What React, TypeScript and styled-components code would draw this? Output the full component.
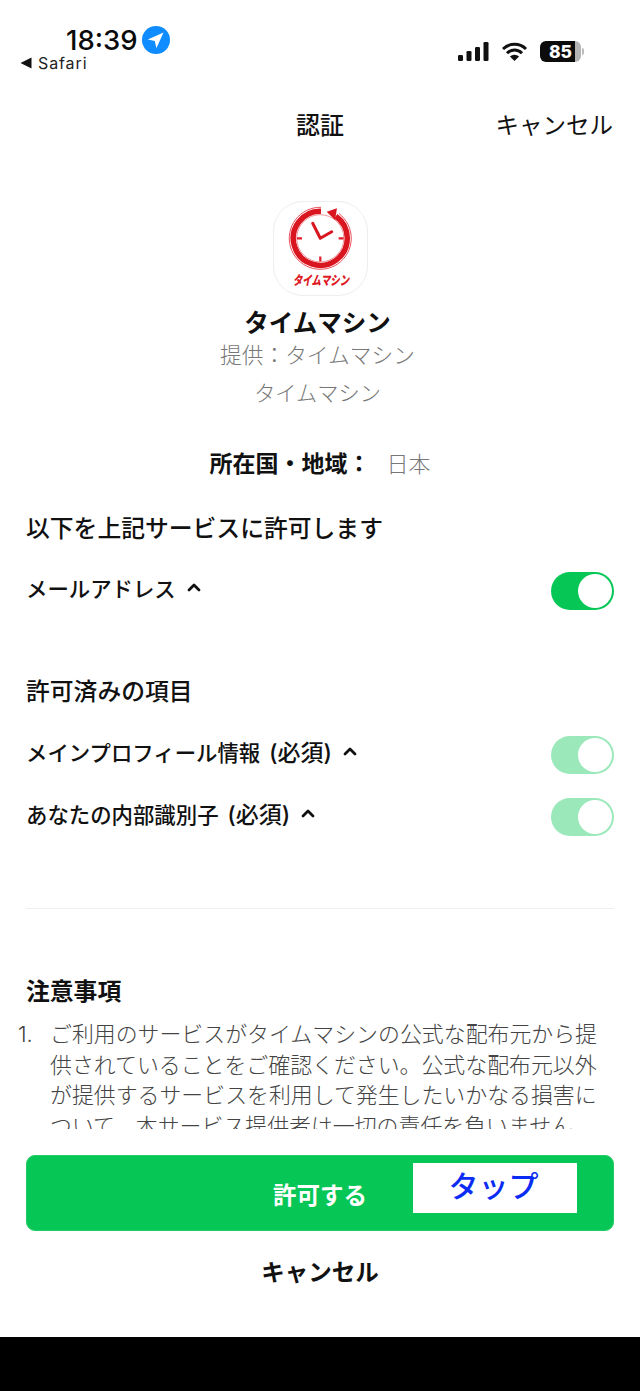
import React from "react";
import styled, { createGlobalStyle } from "styled-components";

const Global = createGlobalStyle`
  html, body { margin: 0; padding: 0; background: #fff; }
  * { box-sizing: border-box; }
`;
const JP = `"Inter", "Noto Sans CJK JP", sans-serif`;

const Page = styled.div`
  width: 640px; height: 1391px; display: flex; flex-direction: column;
  background: #fff; font-family: ${JP}; color: #111; overflow: hidden;
`;
const StatusBar = styled.header`
  height: 100px; padding: 24px 50px 0 20px; display: flex; justify-content: space-between; align-items: flex-start;
`;
const StatusLeft = styled.div`display: flex; flex-direction: column;`;
const TimeRow = styled.div`display: flex; align-items: center; gap: 4px; padding-left: 46px; height: 32px;`;
const Time = styled.span`font: 500 27.5px/32px "Inter", sans-serif; color: #0a0a0a;`;
const BackRow = styled.div`display: flex; align-items: center; gap: 6px; height: 14px;`;
const BackText = styled.span`font: 400 16px/14px "Inter", sans-serif; letter-spacing: 0.9px; color: #222;`;
const StatusRight = styled.div`display: flex; align-items: center; gap: 12px; padding-top: 17px; margin-right: 6px;`;
const Battery = styled.div`
  position: relative; width: 41px; height: 21px; border-radius: 6px; background: linear-gradient(to right, #0c0c0c 85%, #b4b4b4 85%);
  display: flex; align-items: center; justify-content: center; color: #fff;
  font: 800 17.5px/21px "Inter", sans-serif; margin-right: 3px;
  &::after { content: ""; position: absolute; right: -3px; top: 7px; width: 2px; height: 7px; border-radius: 0 2px 2px 0; background: #bbb; }
`;
const Nav = styled.nav`height: 52px; position: relative; display: flex; align-items: center; justify-content: center;`;
const NavTitle = styled.h1`margin: 0; font-size: 24px; font-weight: 500; line-height: 52px;`;
const NavCancel = styled.span`position: absolute; right: 27px; top: 0; font-size: 23.5px; line-height: 52px; color: #111;`;

const Provider = styled.section`display: flex; flex-direction: column; align-items: center; padding-top: 49px;`;
const Logo = styled.div`
  width: 95px; height: 95px; border-radius: 30px; border: 1px solid #eeeeee; background: #fff;
  display: flex; align-items: center; justify-content: center;
`;
const AppName = styled.div`font-size: 24.5px; font-weight: 700; line-height: 34px; margin-top: 10px; padding-right: 5px;`;
const Sub = styled.div<{ $top: number; $size: number }>`
  font-size: ${p => p.$size}px; font-weight: 300; line-height: 30px; color: #777; margin-top: ${p => p.$top}px; padding-right: 5px;
`;
const Region = styled.div`display: flex; justify-content: center; align-items: center; gap: 16px; margin-top: 37px; height: 34px;`;
const RegionLabel = styled.span`font-size: 23px; font-weight: 700; color: #111;`;
const RegionValue = styled.span`font-size: 22px; font-weight: 300; color: #777;`;

const Content = styled.main`padding: 0 26px; display: flex; flex-direction: column;`;
const SectionTitle = styled.h2<{ $top: number; $strong?: boolean }>`
  margin: ${p => p.$top}px 0 0; font-size: 23.8px; font-weight: ${p => p.$strong ? 700 : 500}; line-height: 34px; color: #111;
`;
const Row = styled.div<{ $top: number }>`
  margin-top: ${p => p.$top}px; height: 38px; display: flex; align-items: center; justify-content: space-between;
`;
const RowLabel = styled.div`display: flex; align-items: center; gap: 11px; font-size: 21.4px; font-weight: 500; color: #111; padding-bottom: 8px;`;
const Required = styled.span`font-size: 23px; margin-left: 3px;`;
const Toggle = styled.span<{ $muted?: boolean }>`
  width: 63px; height: 38px; border-radius: 19px; background: ${p => p.$muted ? "#9BE9BB" : "#06C755"};
  display: flex; align-items: center; justify-content: flex-end; padding-right: 2px;
`;
const Knob = styled.span`width: 34px; height: 34px; border-radius: 50%; background: #fff;`;
const Divider = styled.hr`border: 0; height: 1px; background: #efefef; margin: 72px 0 0;`;
const Notes = styled.div`
  height: 110px; overflow: hidden; margin: 10px 0 0 -8px; display: flex; color: #444;
  font-size: 21.9px; font-weight: 300; line-height: 30.6px;
`;
const Num = styled.span`width: 24px; flex: none; font-family: "Inter", sans-serif;`;
const NoteText = styled.p`margin: 0 0 0 8px; white-space: pre; word-spacing: -6px;`;

const Footer = styled.footer`padding: 26px 26px 0;`;
const Primary = styled.button`
  position: relative; width: 100%; height: 76px; border: 1px solid #22cc66; border-radius: 9px; background: #06C755; color: #fff;
  font-family: ${JP}; font-size: 23.5px; font-weight: 700; padding: 2px 0 0; display: block;
`;
const TapNote = styled.span`
  position: absolute; left: 386px; top: 7px; width: 164px; height: 50px; background: #fff; color: #0a2cf5;
  display: flex; align-items: center; justify-content: center; font-size: 30px; font-weight: 500; padding: 0 3px 8px 0;
`;
const Secondary = styled.div`height: 106px; text-align: center; padding-top: 24px; font-size: 23.5px; font-weight: 700; line-height: 36px; color: #111;`;
const BlackBar = styled.div`flex: 1; background: #000;`;

const Chevron = () => (
  <svg width="14" height="10" viewBox="0 0 14 10" aria-hidden="true">
    <path d="M2 8 7 3l5 5" fill="none" stroke="#111" strokeWidth="2.8" strokeLinecap="round" strokeLinejoin="round" />
  </svg>
);

const ClockLogo = () => (
  <svg width="93" height="93" viewBox="0 0 93 93" aria-hidden="true">
    <path d="M47 5.3A31 31 0 1 0 65 11.6" fill="none" stroke="#e8505a" strokeWidth="1" />
    <path d="M47 9.3A27 27 0 1 0 61.8 14.2" fill="none" stroke="#d9161f" strokeWidth="5.5" />
    <circle cx="46.3" cy="36.3" r="23.6" fill="none" stroke="#ee8a90" strokeWidth="0.9" />
    <path d="M52.7 9.7 63 6.3 61 18z" fill="#d9161f" />
    <path d="M23 36.3h5M64.6 36.3h5M46.3 54.5v5" stroke="#df1f2b" strokeWidth="2.2" />
    <path d="M38.7 21.3 46.3 36.3 57.7 29.7" fill="none" stroke="#d9161f" strokeWidth="3" strokeLinejoin="round" strokeLinecap="round" />
    <text x="47" y="83" textAnchor="middle" textLength="56" lengthAdjust="spacingAndGlyphs" fontFamily='"Noto Sans CJK JP", sans-serif' fontWeight="900" fontStyle="italic" fontSize="13" fill="#dd1a25">タイムマシン</text>
  </svg>
);

export default function App() {
  return (
    <Page>
      <Global />
      <StatusBar>
        <StatusLeft>
          <TimeRow>
            <Time>18:39</Time>
            <svg width="28" height="28" viewBox="0 0 28 28" aria-hidden="true">
              <circle cx="14" cy="14" r="14" fill="#0F8CFF" />
              <path d="M21.5 6.5 5.8 13.6l7 1.4 1.6 7.2z" fill="#fff" />
            </svg>
          </TimeRow>
          <BackRow>
            <svg width="12" height="12" viewBox="0 0 12 12" aria-hidden="true"><path d="M0.5 6 11.5 0.5v11z" fill="#111" /></svg>
            <BackText>Safari</BackText>
          </BackRow>
        </StatusLeft>
        <StatusRight>
          <svg width="31" height="19" viewBox="0 0 31 19" aria-hidden="true">
            <rect x="0" y="13" width="5" height="6" rx="1.3" fill="#111" />
            <rect x="8.5" y="9" width="5" height="10" rx="1.3" fill="#111" />
            <rect x="17" y="5" width="5" height="14" rx="1.3" fill="#111" />
            <rect x="25.5" y="0" width="5" height="19" rx="1.3" fill="#111" />
          </svg>
          <svg width="27" height="19" viewBox="0 0 27 19" aria-hidden="true">
            <path d="M2 7a16.5 16.5 0 0 1 23 0M6 11.2a10.6 10.6 0 0 1 15 0" fill="none" stroke="#111" strokeWidth="3" />
            <path d="M13.5 19 8.9 14.6a6.6 6.6 0 0 1 9.2 0z" fill="#111" />
          </svg>
          <Battery>85</Battery>
        </StatusRight>
      </StatusBar>
      <Nav>
        <NavTitle>認証</NavTitle>
        <NavCancel>キャンセル</NavCancel>
      </Nav>
      <Provider>
        <Logo><ClockLogo /></Logo>
        <AppName>タイムマシン</AppName>
        <Sub $top={0} $size={21.7}>提供：タイムマシン</Sub>
        <Sub $top={8} $size={21.2}>タイムマシン</Sub>
        <Region><RegionLabel>所在国・地域：</RegionLabel><RegionValue>日本</RegionValue></Region>
      </Provider>
      <Content>
        <SectionTitle $top={33}>以下を上記サービスに許可します</SectionTitle>
        <Row $top={26}><RowLabel>メールアドレス<Chevron /></RowLabel><Toggle><Knob /></Toggle></Row>
        <SectionTitle $top={65}>許可済みの項目</SectionTitle>
        <Row $top={27}><RowLabel><span>メインプロフィール情報 <Required>(必須)</Required></span><Chevron /></RowLabel><Toggle $muted><Knob /></Toggle></Row>
        <Row $top={24}><RowLabel><span>あなたの内部識別子 <Required>(必須)</Required></span><Chevron /></RowLabel><Toggle $muted><Knob /></Toggle></Row>
        <Divider />
        <SectionTitle $top={66} $strong>注意事項</SectionTitle>
        <Notes>
          <Num>1.</Num>
          <NoteText>{"ご利用のサービスがタイムマシン の公式な配布元から提\n供されていることをご確認ください。公式な配布元以外\nが提供するサービスを利用して発生したいかなる損害に\nついて、本サービス提供者は一切の責任を負いません。"}</NoteText>
        </Notes>
      </Content>
      <Footer>
        <Primary>許可する<TapNote>タップ</TapNote></Primary>
        <Secondary>キャンセル</Secondary>
      </Footer>
      <BlackBar />
    </Page>
  );
}
